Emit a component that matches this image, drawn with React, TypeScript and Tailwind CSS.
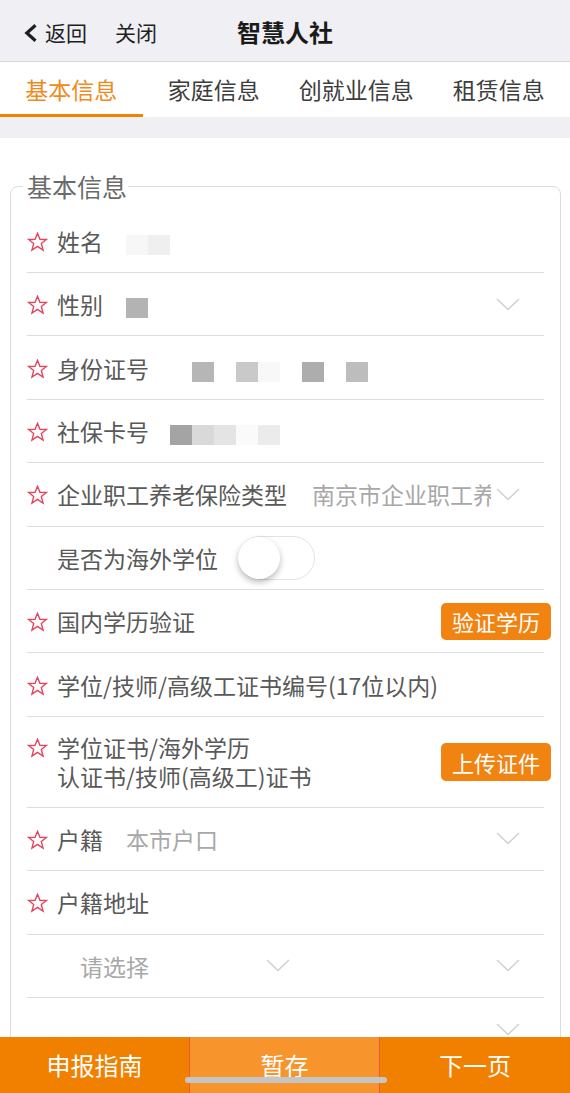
import React from "react";

const Star = () => (
  <svg width="21" height="20" viewBox="0 0 24 23" className="shrink-0 mt-[2px]">
    <polygon
      points="12,1.5 14.8,8.3 22.2,8.6 16.4,13.2 18.4,20.8 12,16.6 5.6,20.8 7.6,13.2 1.8,8.6 9.2,8.3"
      fill="none"
      stroke="#e4455f"
      strokeWidth="1.6"
      strokeLinejoin="miter"
    />
  </svg>
);

const Chevron = () => (
  <svg width="24" height="13" viewBox="0 0 24 13" className="shrink-0">
    <polyline points="1,1 12,11.5 23,1" fill="none" stroke="#d0d0d0" strokeWidth="1.5" />
  </svg>
);

const StarSlot = ({ show = true }: { show?: boolean }) => (
  <span className="w-[21px] mr-[9px] shrink-0 flex items-center">{show && <Star />}</span>
);

const Label = ({ children }: { children: React.ReactNode }) => (
  <span className="text-[23px] leading-[30px] text-[#595959] whitespace-nowrap">{children}</span>
);

const Mosaic = ({ cells, className }: { cells: string[]; className: string }) => (
  <div className={"flex mt-[8px] " + className}>
    {cells.map((c, i) => (
      <span key={i} className={"w-[22px] h-[20px] " + c} />
    ))}
  </div>
);

const rowCls = "flex items-center h-[63.4px] border-b border-[#dedede]";

export default function App() {
  return (
    <div className="h-[1093px] w-[570px] flex flex-col overflow-hidden bg-white font-['Noto_Sans_CJK_SC',sans-serif]">
      {/* Header */}
      <div className="grid grid-cols-[1fr_auto_1fr] items-center h-[62px] pt-[3px] bg-[#efeff4] border-b border-[#d8d8d8] shrink-0">
        <div className="flex items-center pl-[24px] text-[21px] leading-none text-[#1f1f1f]">
          <svg width="13" height="18" viewBox="0 0 13 18" className="mt-[2px]">
            <polyline points="11.5,1.2 2.8,9 11.5,16.8" fill="none" stroke="#1f1f1f" strokeWidth="3.2" />
          </svg>
          <span className="ml-[8px]">返回</span>
          <span className="ml-[28px]">关闭</span>
        </div>
        <div className="text-[24px] leading-none font-bold text-[#1a1a1a]">智慧人社</div>
        <div />
      </div>

      {/* Tabs */}
      <div className="grid grid-cols-4 h-[55px] bg-white shrink-0">
        <div className="flex items-center justify-center pt-[3px] border-b-[3px] border-[#f08300] text-[23px] text-[#f08a1c]">基本信息</div>
        <div className="flex items-center justify-center pt-[3px] border-b-[3px] border-transparent text-[23px] text-[#3d3d3d]">家庭信息</div>
        <div className="flex items-center justify-center pt-[3px] border-b-[3px] border-transparent text-[23px] text-[#3d3d3d]">创就业信息</div>
        <div className="flex items-center justify-center pt-[3px] border-b-[3px] border-transparent text-[23px] text-[#3d3d3d]">租赁信息</div>
      </div>

      <div className="h-[21px] bg-[#efeff4] shrink-0" />

      {/* Content */}
      <div className="flex-1 overflow-hidden bg-white">
        <fieldset className="min-w-0 mt-[33px] ml-[10px] mr-[9px] px-[16px] pb-[10px] pt-[8.6px] border border-[#dcdcdc] rounded-[8px]">
          <legend className="-ml-[4px] pl-[4px] pr-[1px] text-[25px] leading-[30px] text-[#6a6a6a]">基本信息</legend>

          <div className={rowCls}>
            <StarSlot />
            <Label>姓名</Label>
            <Mosaic className="ml-[23px]" cells={["bg-[#f7f7f7]", "bg-[#efefef]"]} />
          </div>

          <div className={rowCls}>
            <StarSlot />
            <Label>性别</Label>
            <Mosaic className="ml-[23px]" cells={["bg-[#b3b3b3]"]} />
            <span className="ml-auto mr-[24px]"><Chevron /></span>
          </div>

          <div className={rowCls}>
            <StarSlot />
            <Label>身份证号</Label>
            <Mosaic
              className="ml-[43px]"
              cells={["bg-[#b6b6b6]", "bg-transparent", "bg-[#c9c9c9]", "bg-[#f8f8f8]", "bg-transparent", "bg-[#adadad]", "bg-transparent", "bg-[#bdbdbd]"]}
            />
          </div>

          <div className={rowCls}>
            <StarSlot />
            <Label>社保卡号</Label>
            <Mosaic
              className="ml-[21px]"
              cells={["bg-[#a4a4a4]", "bg-[#d9d9d9]", "bg-[#e4e4e4]", "bg-[#fafafa]", "bg-[#ebebeb]"]}
            />
          </div>

          <div className={rowCls}>
            <StarSlot />
            <Label>企业职工养老保险类型</Label>
            <span className="flex-1 min-w-0 ml-[25px] mr-[5px] overflow-hidden whitespace-nowrap text-[23px] leading-[30px] text-[#a8a8a8]">
              南京市企业职工养老保险
            </span>
            <span className="mr-[24px]"><Chevron /></span>
          </div>

          <div className={rowCls}>
            <StarSlot show={false} />
            <Label>是否为海外学位</Label>
            <div className="ml-[20px] w-[77px] h-[44px] rounded-full border-[1.5px] border-[#e3e3e3] bg-white flex items-center">
              <div className="w-[42px] h-[42px] -ml-[1px] rounded-full bg-white shadow-[0_3px_6px_rgba(0,0,0,0.28)]" />
            </div>
          </div>

          <div className={rowCls}>
            <StarSlot />
            <Label>国内学历验证</Label>
            <button className="ml-auto -mr-[7px] w-[110px] h-[37px] rounded-[5px] bg-[#f18311] text-white text-[22px] leading-none">
              验证学历
            </button>
          </div>

          <div className={rowCls}>
            <StarSlot />
            <Label>学位/技师/高级工证书编号(17位以内)</Label>
          </div>

          <div className="flex items-center h-[91px] border-b border-[#dedede]">
            <div className="flex items-start">
              <span className="h-[29px] flex items-center"><StarSlot /></span>
              <div className="text-[23px] leading-[29px] text-[#595959]">
                <div>学位证书/海外学历</div>
                <div>认证书/技师(高级工)证书</div>
              </div>
            </div>
            <button className="ml-auto -mr-[7px] w-[110px] h-[38px] rounded-[5px] bg-[#f18311] text-white text-[22px] leading-none">
              上传证件
            </button>
          </div>

          <div className={rowCls}>
            <StarSlot />
            <Label>户籍</Label>
            <span className="ml-[23px] text-[23px] leading-[30px] text-[#a8a8a8]">本市户口</span>
            <span className="ml-auto mr-[24px]"><Chevron /></span>
          </div>

          <div className={rowCls}>
            <StarSlot />
            <Label>户籍地址</Label>
          </div>

          <div className={rowCls}>
            <div className="w-[263px] flex items-center justify-between pl-[53px]">
              <span className="text-[23px] leading-[30px] text-[#a8a8a8]">请选择</span>
              <Chevron />
            </div>
            <span className="ml-auto mr-[24px]"><Chevron /></span>
          </div>

          <div className={rowCls}>
            <span className="ml-auto mr-[24px]"><Chevron /></span>
          </div>

          <div className={rowCls} />
        </fieldset>
      </div>

      {/* Bottom bar */}
      <div className="relative h-[56px] flex shrink-0 text-white text-[24px] leading-none">
        <div className="w-[189px] flex items-center justify-center bg-[#f28000]">申报指南</div>
        <div className="w-[190px] flex items-center justify-center bg-[#f7942c] border-l border-[#e35a3c]">暂存</div>
        <div className="flex-1 flex items-center justify-center bg-[#f28000] border-l border-[#e35a3c]">下一页</div>
        <div className="absolute left-[185px] bottom-[10px] w-[202px] h-[6px] rounded-full bg-[#c5c5c5]" />
      </div>
    </div>
  );
}
